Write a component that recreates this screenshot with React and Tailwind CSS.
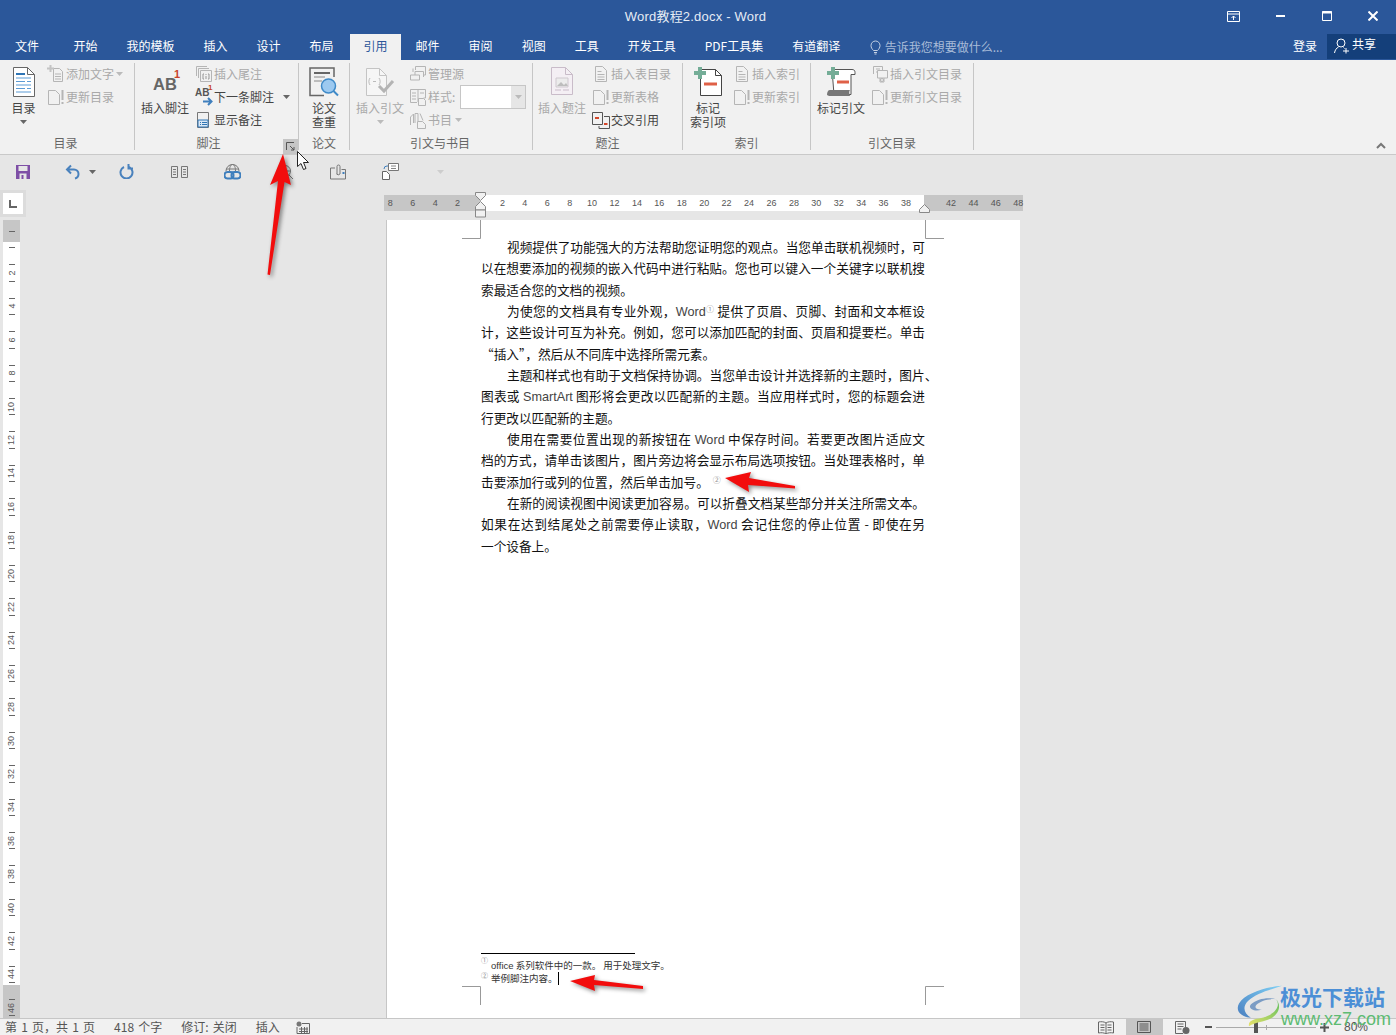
const cjk = "font-['Microsoft_YaHei','Noto_Sans_CJK_SC','Liberation_Sans',sans-serif]"

const tabs = ['开始', '我的模板', '插入', '设计', '布局', '引用', '邮件', '审阅', '视图', '工具', '开发工具', 'PDF工具集', '有道翻译']

const latin = "font-['Liberation_Sans'] text-[#444]"

const paragraphs = [
  { lines: ['视频提供了功能强大的方法帮助您证明您的观点。当您单击联机视频时，可', '以在想要添加的视频的嵌入代码中进行粘贴。您也可以键入一个关键字以联机搜'], last: '索最适合您的文档的视频。' },
  {
    lines: [
      <>为使您的文档具有专业外观，<span className={latin}>Word</span><sup className="text-[8px] text-[#999] leading-[0]">①</sup> 提供了页眉、页脚、封面和文本框设</>,
      '计，这些设计可互为补充。例如，您可以添加匹配的封面、页眉和提要栏。单击',
    ],
    last: '“插入”，然后从不同库中选择所需元素。',
  },
  {
    lines: [
      '主题和样式也有助于文档保持协调。当您单击设计并选择新的主题时，图片、',
      <>图表或 <span className={latin}>SmartArt</span> 图形将会更改以匹配新的主题。当应用样式时，您的标题会进</>,
    ],
    last: '行更改以匹配新的主题。',
  },
  {
    lines: [
      <>使用在需要位置出现的新按钮在 <span className={latin}>Word</span> 中保存时间。若要更改图片适应文</>,
      '档的方式，请单击该图片，图片旁边将会显示布局选项按钮。当处理表格时，单',
    ],
    last: <>击要添加行或列的位置，然后单击加号。<sup className="ml-1 text-[8px] text-[#999] leading-[0]">②</sup></>,
  },
  {
    lines: [
      '在新的阅读视图中阅读更加容易。可以折叠文档某些部分并关注所需文本。',
      <>如果在达到结尾处之前需要停止读取，<span className={latin}>Word</span> 会记住您的停止位置 - 即使在另</>,
    ],
    last: '一个设备上。',
  },
]

function Page({ children }) {
  return (
    <svg width="18" height="18" viewBox="0 0 18 18" fill="none" stroke="#b5b5b5">
      {children}
    </svg>
  )
}

const DocSmall = () => (
  <Page>
    <path d="M3.5 1.5h7l4 4v11h-11z" />
    <path d="M5.5 6.5h4M5.5 9.5h7M5.5 12h7M5.5 14.5h7" />
  </Page>
)

const UpdateSmall = () => (
  <Page>
    <path d="M1.5 2.5h7l4 4v10h-11z" />
    <path d="M15.5 2v10M15.5 14v2" strokeWidth="2" />
  </Page>
)

const AddText = () => (
  <Page>
    <path d="M6.5 3.5h6l3 3v10h-9z" />
    <path d="M8 9h6M8 11.5h6M8 14h6" />
    <path d="M3.5 0v7M0 3.5h7" strokeWidth="2" stroke="#c4c4c4" />
  </Page>
)

const EndnoteIcon = () => (
  <Page>
    <path d="M1.5 11V1.5H12M3.5 13V3.5H14M5.5 16.5v-11h11v11z" />
    <path d="M8 9v5M8 9h1M8 14h1M14 9v5M14 9h-1M14 14h-1M11 9v1M11 11v3" stroke="#999" />
  </Page>
)

const NextNote = () => (
  <div className="relative w-[18px] h-[18px] font-['Liberation_Sans']">
    <span className="absolute left-0 top-[-2px] text-[10px] font-bold text-[#555] leading-[14px]">AB</span>
    <span className="absolute left-[13px] top-[-5px] text-[8px] font-bold text-[#c8432b] leading-[10px]">1</span>
    <svg className="absolute left-[8px] top-[9px]" width="10" height="9" viewBox="0 0 10 9" fill="none" stroke="#3f7fbd" strokeWidth="2">
      <path d="M0 4.5h8M5 1l3.5 3.5L5 8" />
    </svg>
  </div>
)

const ShowNotes = () => (
  <svg width="18" height="18" viewBox="0 0 18 18" fill="none">
    <path d="M2.5 1.5h11v15h-11z" stroke="#777" />
    <path d="M3 9h10v7H3z" fill="#dbe8f5" stroke="#2f75b5" />
    <path d="M5 11.5h1M7 11.5h5M5 13.5h1M7 13.5h5" stroke="#2f75b5" />
  </svg>
)

const Sources = () => (
  <Page>
    <path d="M6.5 5V1.5h10V10H14M4 7V3.5M1.5 15v-5h9v5z" />
    <path d="M6 10V6.5h8.5V12" />
  </Page>
)

const StyleIcon = () => (
  <Page>
    <path d="M1.5 1.5h15V10h-2M1.5 1.5v13H8M9 1.5V14" />
    <path d="M3 5h4M3 8h4M3 11h4M11 5h4" />
    <path d="M9.5 10.5h5l2 2v5h-7z" />
  </Page>
)

const BookIcon = () => (
  <Page>
    <path d="M1.5 14V6l3-3v9M6 12V2.5h3V10M11 2.5l3 7" />
    <path d="M8.5 10.5h5l3 3v4h-8z" />
  </Page>
)

const CrossRef = () => (
  <svg width="18" height="18" viewBox="0 0 18 18" fill="none">
    <path d="M.5 1.5h10v12H.5zM12 5.5h5.5v12H7V15" stroke="#555" />
    <path d="M3 7h4" stroke="#d5472b" strokeWidth="2" />
    <path d="M12 13h3.5" stroke="#d5472b" strokeWidth="2" />
  </svg>
)

const ScrollSmall = () => (
  <Page>
    <path d="M2.5 9V1.5h9V5M5 4h4M5 7h2" />
    <path d="M6.5 5.5h10V13h-10zM9 13v4h4v-4" />
    <circle cx="11" cy="15" r="1.5" />
  </Page>
)

const Caret = ({ color = '#666' }) => (
  <svg width="7" height="4" viewBox="0 0 7 4" className="shrink-0">
    <path d="M0 0h7L3.5 4z" fill={color} />
  </svg>
)

const TocBig = () => (
  <svg width="22" height="30" viewBox="0 0 22 30" fill="none">
    <path d="M.5.5h14l7 7v22H.5z" fill="#fff" stroke="#666" />
    <path d="M14.5.5v7h7" stroke="#666" />
    <path d="M3 7h9" stroke="#2f75b5" strokeWidth="2" />
    <path d="M3 11h15M3 14.5h9M14 14.5h4M3 18h15M3 21.5h9M14 21.5h4M3 25h15" stroke="#5b9bd5" />
  </svg>
)

const EssayBig = () => (
  <svg width="30" height="30" viewBox="0 0 30 30" fill="none">
    <path d="M15 28.5H1V1h24v9" stroke="#666" strokeWidth="1.5" />
    <path d="M5 6h16" stroke="#666" strokeWidth="2" />
    <path d="M5 10h11M5 14h8" stroke="#888" />
    <circle cx="19.5" cy="19" r="7" fill="#9cc9f0" stroke="#3f8ac8" strokeWidth="1.5" />
    <path d="M24.5 24l4.5 4.5" stroke="#3f8ac8" strokeWidth="2" />
  </svg>
)

const CiteBig = () => (
  <svg width="30" height="30" viewBox="0 0 30 30" fill="none">
    <path d="M1.5 1.5h13l7 7v20h-20z" stroke="#c4c4c4" fill="#f6f6f6" />
    <path d="M14.5 1.5v7h7" stroke="#c4c4c4" />
    <path d="M5 11c-1.500 2-1.500 5 0 7M8 14.500h3M14 11c1.500 2 1.500 5 0 7" stroke="#bbb" />
    <path d="M14 19l5 5 9-10" stroke="#b4b4b4" strokeWidth="3" />
  </svg>
)

const CaptionBig = () => (
  <svg width="22" height="28" viewBox="0 0 22 28" fill="none">
    <path d="M.5.5h14l7 7v20H.5z" fill="#f4eff4" stroke="#c9bcc9" />
    <path d="M14.5.5v7h7" stroke="#c9bcc9" />
    <path d="M5 11h12v9H5z" fill="#ececec" stroke="#cfc8cf" />
    <path d="M6 19l4-4 3 3 2-2 2 3z" fill="#bdbdbd" />
    <path d="M4 23h6M12 23h6" stroke="#c9bcc9" />
  </svg>
)

const PlusBadge = () => (
  <path d="M7 0v12M1 6h12" stroke="#74ad97" strokeWidth="4" />
)

const MarkEntryBig = () => (
  <svg width="30" height="30" viewBox="0 0 30 30" fill="none">
    <path d="M7.5 2.5h15l6 6v20h-21z" fill="#fff" stroke="#444" />
    <path d="M22.5 2.5v6h6" stroke="#444" />
    <PlusBadge />
    <path d="M11 17h13" stroke="#df6047" strokeWidth="3" />
  </svg>
)

const MarkCiteBig = () => (
  <svg width="30" height="30" viewBox="0 0 30 30" fill="none">
    <path d="M6 2.5h20c2 0 3 1 3 3v2h-4v20H8z" fill="#fff" stroke="#555" />
    <path d="M1 28c0-3 1-5 3-5h20c-1 1-1 4 0 6H3z" fill="#777" />
    <PlusBadge />
    <path d="M11 15h12" stroke="#df6047" strokeWidth="3" />
  </svg>
)

function SmallRow({ icon, children, off, caret, className = '' }) {
  return (
    <div className={`h-[23px] flex items-center gap-[1px] whitespace-nowrap ${off ? 'text-[#a9a9a9]' : 'text-[#444]'} ${className}`}>
      <span className="w-[18px] h-[18px] shrink-0 flex items-center justify-center">{icon}</span>
      <span>{children}</span>
      {caret}
    </div>
  )
}

function SmallCol({ children, className = '' }) {
  return <div className={`-mt-[1px] ${className}`}>{children}</div>
}

function BigButton({ icon, lines, off, caret, className = '' }) {
  return (
    <div className={`flex flex-col items-center shrink-0 ${off ? 'text-[#a9a9a9]' : 'text-[#444]'} ${className}`}>
      <div className="h-[35px] pt-[4px] flex justify-center">{icon}</div>
      <div className="mt-[3px] leading-[14px] text-center whitespace-nowrap">
        {lines.map((l) => (
          <div key={l}>{l}</div>
        ))}
      </div>
      {caret && (
        <div className="mt-[5px]">
          <Caret color={off ? '#bbb' : '#666'} />
        </div>
      )}
    </div>
  )
}

function Group({ width, label, labelClass = '', children, extra }) {
  return (
    <div className={`relative h-[87px] shrink-0 flex flex-col border-r border-[#c6c6c6] ${width}`}>
      <div className="h-[69px] flex">{children}</div>
      <div className={`h-[18px] pt-[3px] text-center text-[#666] leading-[16px] ${labelClass}`}>{label}</div>
      {extra}
    </div>
  )
}

function Ribbon() {
  return (
    <div className="h-[95px] shrink-0 pt-[3px] bg-[#f1f1f1] border-b border-[#c9c9c9] flex text-[12px] relative">
      <Group width="w-[135px]" label="目录" labelClass="pr-[3px]">
        <BigButton className="w-[47px]" icon={<TocBig />} lines={['目录']} caret />
        <SmallCol>
          <SmallRow off icon={<AddText />} caret={<span className="ml-[1px]"><Caret color="#bbb" /></span>}>添加文字</SmallRow>
          <SmallRow off icon={<UpdateSmall />}>更新目录</SmallRow>
        </SmallCol>
      </Group>
      <Group
        width="w-[164px]"
        label="脚注"
        labelClass="pr-[16px]"
        extra={
          <div className="absolute right-0 top-[76px] w-[15px] h-[15px] bg-[#c6c6c6] flex items-center justify-center">
            <svg width="9" height="9" viewBox="0 0 9 9" fill="none" stroke="#555">
              <path d="M.5 8V.5H8M4 4l4 4M8 5v3H5" />
            </svg>
          </div>
        }
      >
        <BigButton
          className="w-[60px]"
          icon={
            <div className="relative w-[30px] h-[26px] font-['Liberation_Sans'] text-center">
              <span className="absolute left-[3px] top-[6px] text-[16.5px] font-bold text-[#666] leading-[22px]">AB</span>
              <span className="absolute right-0 top-[1px] text-[11px] font-bold text-[#c8432b] leading-[12px]">1</span>
            </div>
          }
          lines={['插入脚注']}
        />
        <SmallCol>
          <SmallRow off icon={<EndnoteIcon />}>插入尾注</SmallRow>
          <SmallRow icon={<NextNote />} caret={<span className="ml-[8px]"><Caret /></span>}>下一条脚注</SmallRow>
          <SmallRow icon={<ShowNotes />}>显示备注</SmallRow>
        </SmallCol>
      </Group>
      <Group width="w-[51px]" label="论文">
        <BigButton className="w-full" icon={<EssayBig />} lines={['论文', '查重']} />
      </Group>
      <Group width="w-[183px]" label="引文与书目" labelClass="pr-[2px]">
        <BigButton className="w-[58px] ml-[1px]" off icon={<CiteBig />} lines={['插入引文']} caret />
        <SmallCol>
          <SmallRow off icon={<Sources />}>管理源</SmallRow>
          <SmallRow
            off
            icon={<StyleIcon />}
            caret={
              <span className="ml-[4px] w-[66px] h-[24px] border border-[#c6c6c6] bg-white flex justify-end">
                <span className="w-[14px] bg-[#e6e6e6] flex items-center justify-center">
                  <Caret color="#bbb" />
                </span>
              </span>
            }
          >
            样式:
          </SmallRow>
          <SmallRow off icon={<BookIcon />} caret={<span className="ml-[2px]"><Caret color="#bbb" /></span>}>书目</SmallRow>
        </SmallCol>
      </Group>
      <Group width="w-[150px]" label="题注">
        <BigButton className="w-[58px]" off icon={<CaptionBig />} lines={['插入题注']} />
        <SmallCol className="ml-[1px]">
          <SmallRow off icon={<DocSmall />}>插入表目录</SmallRow>
          <SmallRow off icon={<UpdateSmall />}>更新表格</SmallRow>
          <SmallRow icon={<CrossRef />}>交叉引用</SmallRow>
        </SmallCol>
      </Group>
      <Group width="w-[128px]" label="索引">
        <BigButton className="w-[50px]" icon={<MarkEntryBig />} lines={['标记', '索引项']} />
        <SmallCol>
          <SmallRow off icon={<DocSmall />}>插入索引</SmallRow>
          <SmallRow off icon={<UpdateSmall />}>更新索引</SmallRow>
        </SmallCol>
      </Group>
      <Group width="w-[163px]" label="引文目录">
        <BigButton className="w-[60px]" icon={<MarkCiteBig />} lines={['标记引文']} />
        <SmallCol>
          <SmallRow off icon={<ScrollSmall />}>插入引文目录</SmallRow>
          <SmallRow off icon={<UpdateSmall />}>更新引文目录</SmallRow>
        </SmallCol>
      </Group>
      <svg className="absolute right-[10px] top-[82px]" width="10" height="8" viewBox="0 0 10 8" fill="none" stroke="#777" strokeWidth="2">
        <path d="M1 6l4-4 4 4" />
      </svg>
    </div>
  )
}

function Toolbar() {
  return (
    <div className="h-[35px] shrink-0 pb-[2px] flex items-center relative">
      <svg className="ml-[16px]" width="14" height="14" viewBox="0 0 14 14">
        <path d="M0 0h14v14H0z" fill="#7e4fa6" />
        <path d="M2.500 1h9v5h-9z" fill="#e6e6e6" />
        <path d="M3.500 8.500h7V14h-7z" fill="#e6e6e6" />
        <path d="M5.500 10h2v4h-2z" fill="#7e4fa6" />
      </svg>
      <svg className="ml-[35px]" width="16" height="16" viewBox="0 0 16 16" fill="none" stroke="#4a82bd" strokeWidth="2">
        <path d="M6 1.5L2 5.5l4 4M2 5.5h7a4.5 4.5 0 0 1 4.500 4.500c0 2.500-1.500 4-3.500 4.500" />
      </svg>
      <span className="ml-[8px]"><Caret /></span>
      <svg className="ml-[23px]" width="15" height="15" viewBox="0 0 15 15" fill="none" stroke="#4a82bd" strokeWidth="2">
        <path d="M5 3a6 6 0 1 0 5 0M9.500 0v4.500H14" />
      </svg>
      <svg className="ml-[37px]" width="17" height="12" viewBox="0 0 17 12" fill="none" stroke="#777">
        <path d="M.5.5h6v11h-6zM10.500.5h6v11h-6zM2 3.500h3M2 6h3M2 8.500h3M12 3.500h3M12 6h3M12 8.500h3" />
      </svg>
      <svg className="ml-[36px]" width="17" height="17" viewBox="0 0 17 17" fill="none">
        <path d="M2 8a6.500 6.500 0 0 1 13 0M5.500 8c0-3.500 1-6.500 3-6.500s3 3 3 6.500M2 6h13" stroke="#777" />
        <rect x=".5" y="9" width="9" height="6.500" rx="3" stroke="#3f7fbd" strokeWidth="2" />
        <rect x="7.5" y="9" width="9" height="6.500" rx="3" stroke="#3f7fbd" strokeWidth="2" />
      </svg>
      <svg className="ml-[37px]" width="16" height="16" viewBox="0 0 16 16" fill="none" stroke="#777">
        <circle cx="7" cy="7" r="5.500" />
        <path d="M1.500 7h11M7 1.500v11M11 11l4 4" />
      </svg>
      <svg className="ml-[36px]" width="16" height="16" viewBox="0 0 16 16" fill="none" stroke="#777">
        <path d="M5 4H.5v11h15V5.500h-4M7 10V2.500a1.500 1.500 0 0 1 3 0V10a2.500 2.500 0 0 1-3.500 0" />
        <path d="M12.500 8h2v2h-2z" fill="#3f7fbd" stroke="none" />
      </svg>
      <svg className="ml-[36px]" width="17" height="17" viewBox="0 0 17 17" fill="none">
        <path d="M.5 8.500h4l3 3v5h-7z" fill="#fff" stroke="#666" />
        <path d="M6.500.5h10v7h-10z" fill="#fff" stroke="#777" />
        <path d="M9 3h5M9 5.500h5" stroke="#888" />
        <path d="M2 6a3 3 0 0 1 3-3h1" stroke="#3f7fbd" />
      </svg>
      <span className="ml-[38px] opacity-40"><Caret color="#aaa" /></span>
    </div>
  )
}

function HorizontalRuler() {
  const cell = 'w-[22.43px] shrink-0 text-center'
  return (
    <div className="relative h-[16px] w-[639px] flex text-[9px] leading-[16px] text-[#555] font-['Liberation_Sans']">
      <div className="w-[96px] bg-[#c6c6c6] flex justify-end pr-[11.2px]">
        {[8, 6, 4, 2].map((n) => (
          <span key={n} className={cell}>{n}</span>
        ))}
      </div>
      <div className="w-[444px] bg-white flex pl-[11.2px]">
        {Array.from({ length: 19 }, (_, i) => (i + 1) * 2).map((n) => (
          <span key={n} className={cell}>{n}</span>
        ))}
      </div>
      <div className="w-[99px] bg-[#c6c6c6] flex pl-[15.8px]">
        {[42, 44, 46, 48].map((n) => (
          <span key={n} className={cell}>{n}</span>
        ))}
      </div>
      <svg className="absolute left-[91px] top-[-3px]" width="11" height="27" viewBox="0 0 11 27" fill="#f1f1f1" stroke="#888">
        <path d="M.5.5h10v3L5.500 8.500.5 3.500z" />
        <path d="M5.500 9.500l5 5V18H.5v-3.500z" />
        <path d="M.5 18h10v7H.5z" />
      </svg>
      <svg className="absolute left-[535px] top-[9px]" width="11" height="9" viewBox="0 0 11 9" fill="#f1f1f1" stroke="#888">
        <path d="M5.500.5l5 5v3H.5v-3z" />
      </svg>
    </div>
  )
}

function VerticalRuler() {
  const cells = Array.from({ length: 24 }, (_, i) => i * 2)
  return (
    <div className="mt-[3px] ml-[3px] w-[17px] flex-1 overflow-hidden pt-[3px] bg-[linear-gradient(to_bottom,#c6c6c6_22px,#ffffff_22px,#ffffff_765px,#c6c6c6_765px)] font-['Liberation_Sans'] text-[9px] text-[#555]">
      {cells.map((n) => (
        <div key={n} className="h-[33.4px] py-[8px] flex flex-col items-center justify-between">
          <span className="w-[6px] h-px bg-[#666]" />
          <span className="rotate-[-90deg] leading-[10px] whitespace-nowrap">{n || ''}</span>
          <span className="w-[6px] h-px bg-[#666]" />
        </div>
      ))}
    </div>
  )
}

function Corner({ className, path }) {
  return (
    <svg className={`absolute ${className}`} width="19" height="19" viewBox="0 0 19 19" fill="none" stroke="#999">
      <path d={path} />
    </svg>
  )
}

function DocPage() {
  return (
    <div className="relative ml-[2px] w-[634px] flex-1 bg-white border-l border-[#c6c6c6] pt-[16px] pl-[94px] flex flex-col overflow-visible">
      <Corner className="left-[75px] top-0" path="M18.500 0v18.500H0" />
      <Corner className="left-[538px] top-0" path="M.5 0v18.500H19" />
      <Corner className="left-[75px] bottom-[13px]" path="M0 .5h18.500V19" />
      <Corner className="left-[538px] bottom-[13px]" path="M19 .5H.5V19" />
      <div className="w-[444px] text-[12.67px] leading-[21.33px] text-[#111]">
        {paragraphs.map((p, i) => (
          <div key={i}>
            {p.lines.map((l, j) => (
              <div key={j} className={`h-[21.33px] text-justify [text-align-last:justify] whitespace-nowrap ${j === 0 ? 'indent-[26px]' : ''}`}>
                {l}
              </div>
            ))}
            <div className="h-[21.33px] whitespace-nowrap">{p.last}</div>
          </div>
        ))}
      </div>
      <div className="mt-auto pb-[33px] text-[9.5px] leading-[13px] text-[#333]">
        <div className="w-[154px] h-px bg-black mb-[5px]" />
        <div className="flex h-[13px] whitespace-nowrap">
          <sup className="w-[10px] text-[7px] text-[#888] leading-[8px]">①</sup>
          <span><span className="font-['Liberation_Sans']">office</span> 系列软件中的一款。 用于处理文字。</span>
        </div>
        <div className="flex items-center h-[13px] whitespace-nowrap">
          <sup className="w-[10px] text-[7px] text-[#888] leading-[8px]">②</sup>
          <span>举例脚注内容。</span>
          <span className="w-px h-[13px] bg-black" />
        </div>
      </div>
    </div>
  )
}

function StatusBar() {
  return (
    <div className="h-[17px] shrink-0 bg-[#f1f1f1] border-t border-[#c6c6c6] flex items-center text-[12px] text-[#555] leading-[16px] relative [word-spacing:1.5px]">
      <span className="ml-[5px] whitespace-nowrap">第 1 页，共 1 页</span>
      <span className="ml-[19px] whitespace-nowrap">418 个字</span>
      <span className="ml-[19px] whitespace-nowrap">修订: 关闭</span>
      <span className="ml-[19px]">插入</span>
      <svg className="ml-[16px]" width="14" height="13" viewBox="0 0 14 13" fill="none" stroke="#666">
        <circle cx="3" cy="3" r="2.500" fill="#777" stroke="none" />
        <path d="M6 2.500h7.500v10H1V6M3 8h9M3 10.500h9M5.500 6v6M8.500 6v6M11 6v6" />
      </svg>
      <div className="ml-auto flex items-center h-full">
        <svg width="16" height="13" viewBox="0 0 16 13" fill="none" stroke="#666">
          <path d="M8 2C6 .5 3 .5.5 1v11C3 11.500 6 11.500 8 13c2-1.500 5-1.500 7.500-1V1C13 .5 10 .5 8 2zM8 2v11M2.500 4h4M2.500 6.500h4M2.500 9h4M9.500 4h4M9.500 6.500h4M9.500 9h4" />
        </svg>
        <div className="ml-[12px] w-[37px] h-full bg-[#c6c6c6] flex items-center justify-center">
          <svg width="14" height="12" viewBox="0 0 14 12" fill="none" stroke="#555">
            <path d="M.5.5h13v11H.5zM2.500 3h9M2.500 5h9M2.500 7h9M2.500 9h9" />
          </svg>
        </div>
        <svg className="ml-[12px]" width="15" height="13" viewBox="0 0 15 13" fill="none" stroke="#666">
          <path d="M8 12.500H.5V.5h10v6M2.500 3h6M2.500 5.500h6M2.500 8h4" />
          <circle cx="11" cy="9.500" r="3.500" fill="#666" stroke="none" />
        </svg>
        <span className="ml-[15px] w-[7px] h-[2px] bg-[#555]" />
        <div className="relative ml-[4px] w-[100px] h-px bg-[#aaa]">
          <span className="absolute left-[38px] top-[-5px] w-[4px] h-[11px] bg-[#555]" />
          <span className="absolute left-[50px] top-[-2px] w-px h-[5px] bg-[#aaa]" />
        </div>
        <svg className="ml-[4px]" width="9" height="9" viewBox="0 0 9 9" stroke="#555" strokeWidth="2">
          <path d="M0 4.500h9M4.500 0v9" />
        </svg>
        <span className="ml-[15px] mr-[28px] font-['Liberation_Sans']">80%</span>
      </div>
    </div>
  )
}

// red annotation arrows and the watermark sit on top of the page
function Overlays() {
  return (
    <>
      <svg className="absolute left-[255px] top-[150px] drop-shadow-[2px_2px_2px_rgba(0,0,0,0.45)]" width="40" height="130" viewBox="0 0 40 130">
        <path d="M28 4L36 35L29.500 32L15 125L12.500 124.500L23 31L15 35Z" fill="#f20d0d" />
      </svg>
      <svg className="absolute left-[720px] top-[470px] drop-shadow-[2px_2px_2px_rgba(0,0,0,0.45)]" width="80" height="24" viewBox="0 0 80 24">
        <path d="M5 8l26-6-2 6 46 8v2.500L28 15l1 7z" fill="#f20d0d" />
      </svg>
      <svg className="absolute left-[566px] top-[972px] drop-shadow-[2px_2px_2px_rgba(0,0,0,0.45)]" width="80" height="22" viewBox="0 0 80 22">
        <path d="M4 9l25-6-1 5 49 6v3L28 13l1 6z" fill="#f20d0d" />
      </svg>
      <svg className="absolute left-[297px] top-[151px]" width="13" height="20" viewBox="0 0 13 20">
        <path d="M.5.500v15l3.500-3 2.500 6 2.500-1-2.500-6h5z" fill="#fff" stroke="#222" />
      </svg>
      <svg className="absolute left-[1236px] top-[985px]" width="48" height="42" viewBox="0 0 48 50" preserveAspectRatio="none">
        <defs>
          <linearGradient id="wmBlue" x1="1" y1="0" x2="0" y2="1">
            <stop offset="0" stopColor="#7ed0f5" />
            <stop offset="1" stopColor="#4a7fc0" />
          </linearGradient>
          <linearGradient id="wmGreen" x1="1" y1="0" x2="0" y2="1">
            <stop offset="0" stopColor="#5fbf5f" />
            <stop offset="1" stopColor="#e8e26a" />
          </linearGradient>
        </defs>
        <path d="M46 1C30 2 9 10 3 22c-4 9 2 16 12 17C8 34 6 26 12 19 20 10 33 6 46 1z" fill="url(#wmBlue)" />
        <path d="M15 23c6-7 18-9 25-6-8-1-16 2-20 7-2 4 2 6 6 5-7 4-15-1-11-6z" fill="#7b9cc4" />
        <path d="M40 17c6 9-3 20-17 23-7 1-11 4-10 9 6-5 16-5 23-10 8-6 9-16 4-22z" fill="url(#wmGreen)" />
      </svg>
      <div className="absolute left-[1280px] top-[983px] text-[21px] leading-[26px] font-bold text-[#4c8fd6] whitespace-nowrap">
        极光下载站
      </div>
      <div className="absolute left-[1281px] top-[1007px] text-[18px] leading-[24px] text-[#5dbb72] font-['Liberation_Sans'] whitespace-nowrap">
        www.xz7.com
      </div>
    </>
  )
}

export default function App() {
  return (
    <div className={`relative w-[1396px] h-[1035px] overflow-hidden flex flex-col bg-[#e6e6e6] ${cjk}`}>
      {/* Title bar */}
      <div className="h-[34px] shrink-0 bg-[#2b579a] relative flex items-center justify-center pr-[5px] text-[13px] text-[#e6ecf5]">
        <span className="font-['Liberation_Sans','Noto_Sans_CJK_SC'] tracking-[0.2px]">Word教程2.docx - Word</span>
        <div className="absolute right-0 top-0 h-[32px] flex items-center">
          <svg width="13" height="11" viewBox="0 0 13 11" fill="none" stroke="#fff">
            <path d="M.5.5h12v10H.5zM1 3h11M6.500 9V5M4.500 7l2-2 2 2" />
          </svg>
          <span className="ml-[36px] w-[9px] h-[2px] bg-white" />
          <svg className="ml-[37px]" width="10" height="10" viewBox="0 0 10 10" fill="none" stroke="#fff">
            <path d="M.5.5h9v9h-9z" />
            <path d="M0 1.500h10" strokeWidth="2" />
          </svg>
          <svg className="ml-[36px] mr-[18px]" width="10" height="10" viewBox="0 0 10 10" fill="none" stroke="#fff" strokeWidth="2">
            <path d="M.5.500l9 9M9.500.500l-9 9" />
          </svg>
        </div>
      </div>

      {/* Tabs */}
      <div className="h-[26px] shrink-0 bg-[#2b579a] flex text-[12px] text-white leading-[24px] whitespace-nowrap">
        <div className="px-[15px]">文件</div>
        <div className="w-[5px]" />
        {tabs.map((t) => (
          <div
            key={t}
            className={t === '引用' ? 'w-[51px] ml-[2px] text-center bg-[#f1f1f1] text-[#2b579a]' : 'px-[14.500px]'}
          >
            {t}
          </div>
        ))}
        <div className="ml-[15px] flex items-center gap-[4px] text-[#a9bcd8] h-[26px]">
          <svg width="11" height="15" viewBox="0 0 11 15" fill="none" stroke="#c5d1e4">
            <path d="M3.500 10.500C2 9 1 7.500 1 5.500a4.500 4.500 0 0 1 9 0c0 2-1 3.500-2.500 5zM4 12.500h3M4.500 14h2" />
          </svg>
          <span>告诉我您想要做什么...</span>
        </div>
        <div className="ml-auto mr-[10px]">登录</div>
        <div className="w-[69px] h-[25px] bg-[#143f7a] flex items-start pl-[7px] gap-[2px]">
          <svg className="mt-[4px]" width="16" height="16" viewBox="0 0 16 16" fill="none" stroke="#fff">
            <circle cx="7" cy="5" r="4" />
            <path d="M.5 15c.5-3 2-5 4-6M9.500 9.500l1 1M12 10v5.500M9 13h6" />
          </svg>
          <span className="leading-[20px]">共享</span>
        </div>
      </div>

      <Ribbon />
      <Toolbar />

      {/* Document area */}
      <div className="flex-1 min-h-0 flex">
        <div className="w-[26px] shrink-0 flex flex-col">
          <div className="w-[26px] h-[27px] bg-[#dcdcdc] p-[3px]">
            <div className="w-full h-full bg-white flex items-center justify-center">
              <span className="w-[8px] h-[8px] border-l-2 border-b-2 border-[#666]" />
            </div>
          </div>
          <VerticalRuler />
        </div>
        <div className="ml-[358px] flex flex-col">
          <div className="mt-[5px] mb-[9px]">
            <HorizontalRuler />
          </div>
          <DocPage />
        </div>
      </div>

      <StatusBar />
      <Overlays />
    </div>
  )
}
